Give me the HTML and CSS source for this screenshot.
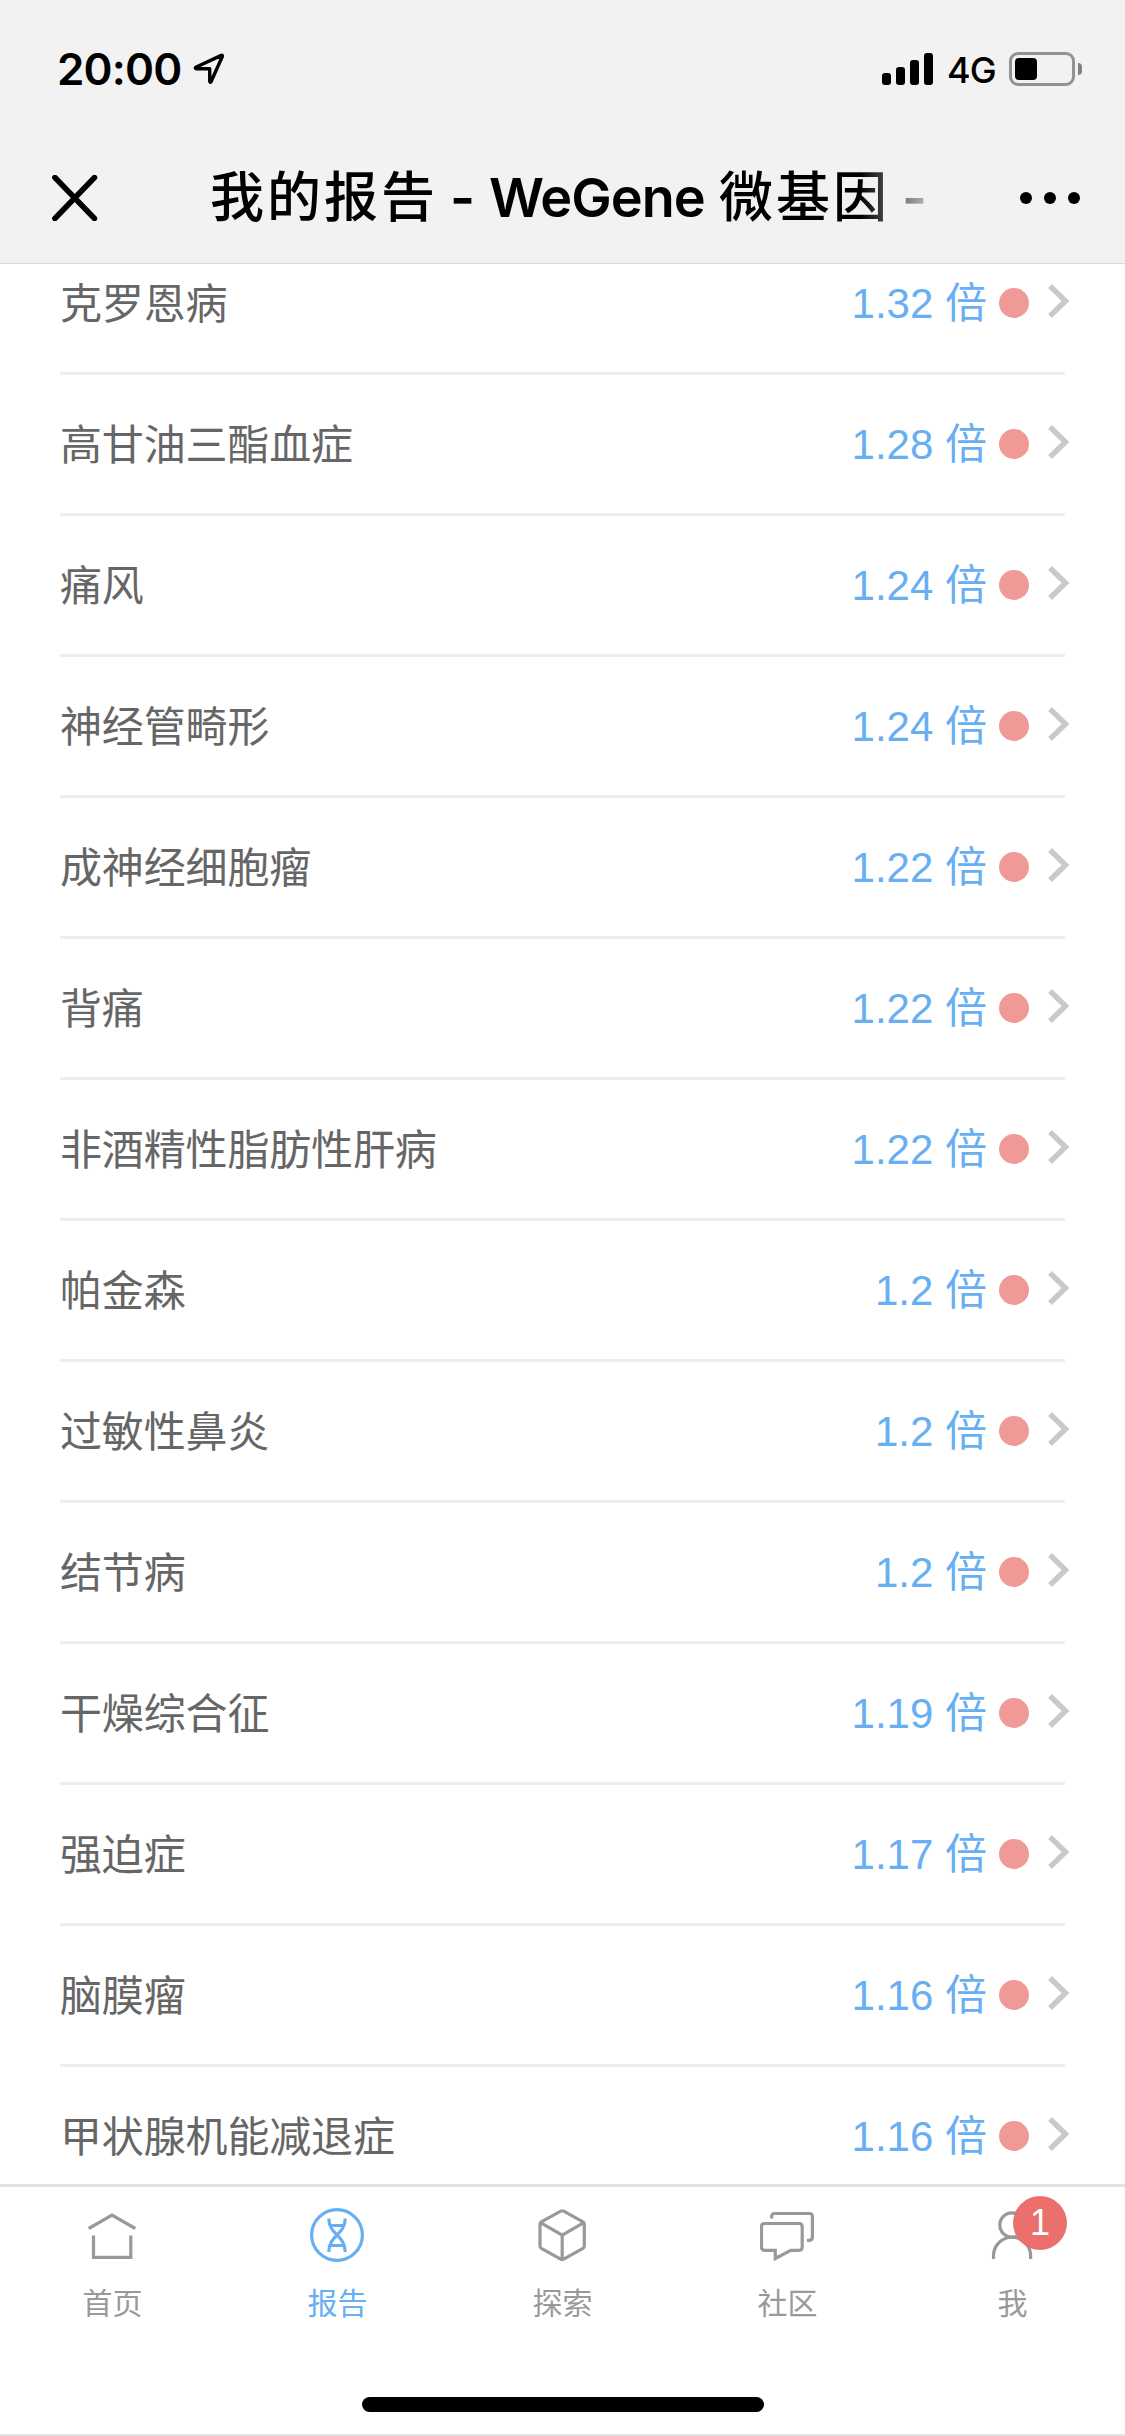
FILE: index.html
```html
<!DOCTYPE html>
<html lang="zh-CN">
<head>
  <meta charset="UTF-8" />
  <meta name="viewport" content="width=device-width, initial-scale=1.0"/>
  <title>我的报告 - WeGene 微基因</title>
  <link rel="stylesheet" href="styles.css">
</head>
<body>

<header class="header">
  <div class="status-bar">
    <span class="time">20:00</span>
    <svg class="location" width="32" height="32" viewBox="0 0 32 32"><path d="M2.8 14.3 L28.3 2.4 Q29.9 2 29.2 3.8 L18 28.8 Q17 30 16.7 28.3 V15.7 L3.4 15.8 Q1.6 15.3 2.8 14.3 Z"/></svg>
    <div class="signal"><i></i><i></i><i></i><i></i></div>
    <span class="network">4G</span>
    <div class="battery"><div class="battery-level"></div></div>
    <div class="battery-cap"></div>
  </div>
  <div class="nav-bar">
    <svg class="close" width="46" height="46" viewBox="0 0 46 46"><path d="M2.9 2.5 L42.5 43.5 M42.5 2.5 L2.9 43.5"/></svg>
    <h1 class="title"><span class="cn">我的报告</span><span class="dash">-</span><span class="en">WeGene </span><span class="cn">微基因</span><span class="dash">-</span></h1>
    <div class="more"><i></i><i></i><i></i></div>
  </div>
</header>

<main class="report">
  <ul class="list" id="list"></ul>
</main>

<nav class="tab-bar">
  <a class="tab">
    <svg width="55" height="54" viewBox="0 0 55 54"><path d="M3.7 20.5 L27 7 L50.3 20.5 M8.5 27.5 V49.3 H45.8 V27.5"/></svg>
    <span>首页</span>
  </a>
  <a class="tab active">
    <svg width="55" height="54" viewBox="0 0 55 54"><circle cx="27" cy="27" r="25.4"/><path d="M18.8 10.5 C18.8 27 35.2 27 35.2 44 M35.2 10.5 C35.2 27 18.8 27 18.8 44 M20.5 17.5 H33.5 M20.5 37.5 H33.5"/></svg>
    <span>报告</span>
  </a>
  <a class="tab">
    <svg width="55" height="54" viewBox="0 0 55 54"><path d="M25.7 3.2 Q27.2 2.3 28.7 3.2 L48 13.8 Q49.3 14.6 49.3 16.2 V37.8 Q49.3 39.5 48 40.3 L28.7 51.2 Q27.2 52.1 25.7 51.2 L6.3 40.3 Q5 39.5 5 37.8 V16.2 Q5 14.6 6.3 13.8 Z M5.6 14.6 L27.2 27.2 L48.8 14.6 M27.2 27.2 V51.5"/></svg>
    <span>探索</span>
  </a>
  <a class="tab">
    <svg width="55" height="54" viewBox="0 0 55 54"><path d="M4.5 15.5 H39 Q42.2 15.5 42.2 18.7 V39 Q42.2 42.3 39 42.3 H30.8 L15.3 50.5 V42.3 H4.7 Q1.5 42.3 1.5 39 V18.7 Q1.5 15.5 4.5 15.5 Z M11.7 10.5 V8.5 Q11.7 5.5 14.7 5.5 H49.3 Q52.4 5.5 52.4 8.5 V29.3 Q52.4 32.3 49.3 32.3 H47"/></svg>
    <span>社区</span>
  </a>
  <a class="tab">
    <svg width="55" height="54" viewBox="0 0 55 54"><circle cx="27" cy="17" r="12.2"/><path d="M8.5 51 V47.8 A18.5 18.5 0 0 1 45.6 47.8 V51"/></svg>
    <span>我</span>
    <b class="badge">1</b>
  </a>
  <div class="home-indicator"></div>
</nav>

<script>
  const reports = [
    ["克罗恩病", "1.32"],
    ["高甘油三酯血症", "1.28"],
    ["痛风", "1.24"],
    ["神经管畸形", "1.24"],
    ["成神经细胞瘤", "1.22"],
    ["背痛", "1.22"],
    ["非酒精性脂肪性肝病", "1.22"],
    ["帕金森", "1.2"],
    ["过敏性鼻炎", "1.2"],
    ["结节病", "1.2"],
    ["干燥综合征", "1.19"],
    ["强迫症", "1.17"],
    ["脑膜瘤", "1.16"],
    ["甲状腺机能减退症", "1.16"]
  ];

  document.getElementById("list").innerHTML = reports.map(([name, risk]) => `
    <li class="item">
      <span class="name">${name}</span>
      <span class="risk">${risk} 倍</span>
      <i class="dot"></i>
      <svg class="arrow" width="22" height="34" viewBox="0 0 22 34"><path d="M2 2 L17.5 17 L2 32"/></svg>
    </li>`).join("");
</script>

</body>
</html>
```
FILE: styles.css
```css
* {
  box-sizing: border-box;
}

body {
  margin: 0;
  height: 2436px;
  display: flex;
  flex-direction: column;
  overflow: hidden;
  background-color: #fff;
  font-family: "Liberation Sans", "Noto Sans CJK SC", sans-serif;
}

svg {
  display: block;
  flex: none;
  fill: none;
}

/* header */
.header {
  flex: none;
  height: 264px;
  background-color: #f2f2f2;
  border-bottom: 1px solid #d9d9d9;
  color: #000;
}

.status-bar {
  display: flex;
  align-items: center;
  height: 138px;
  padding: 0 43px 0 57px;
  font-family: Inter, sans-serif;
}

.time {
  width: 136px;
  font-size: 44px;
  font-weight: 600;
  letter-spacing: -0.8px;
  white-space: nowrap;
}

.location {
  stroke: #000;
  stroke-width: 3.4;
  stroke-linejoin: round;
}

.signal {
  display: flex;
  align-items: flex-end;
  gap: 5px;
  height: 32px;
  margin-left: auto;
}

.signal i {
  width: 9px;
  height: 12px;
  border-radius: 3px;
  background-color: #000;
}

.signal i:nth-child(2) {
  height: 18px;
}

.signal i:nth-child(3) {
  height: 25px;
}

.signal i:nth-child(4) {
  height: 32px;
}

.network {
  width: 62px;
  margin: 2px 0 0 14px;
  font-size: 36px;
  font-weight: 500;
  letter-spacing: -1px;
}

.battery {
  width: 66px;
  height: 34px;
  padding: 3px;
  border: 3px solid #929292;
  border-radius: 9px;
}

.battery-level {
  width: 22px;
  height: 22px;
  border-radius: 4px;
  background-color: #000;
}

.battery-cap {
  width: 4px;
  height: 12px;
  margin-left: 3px;
  border-radius: 0 4px 4px 0;
  background-color: #828282;
}

.nav-bar {
  display: flex;
  align-items: center;
  height: 120px;
  padding: 0 45px 0 52px;
}

.close {
  stroke: #000;
  stroke-width: 5.5;
  stroke-linecap: round;
}

.title {
  display: flex;
  align-items: baseline;
  width: 738px;
  margin: 0 0 0 112px;
  white-space: nowrap;
  overflow: hidden;
  font-family: Inter, "Noto Sans CJK SC", sans-serif;
  font-size: 54px;
  font-weight: 500;
  line-height: 80px;
  -webkit-mask-image: linear-gradient(to right, #000 650px, transparent 738px);
  mask-image: linear-gradient(to right, #000 650px, transparent 738px);
}

.title .cn {
  letter-spacing: 3px;
}

.title .en {
  width: 230px;
  font-weight: 600;
  letter-spacing: -1px;
}

.title .dash {
  width: 51px;
  padding-right: 2px;
  text-align: center;
  font-weight: 600;
}

.more {
  display: flex;
  gap: 12px;
  margin-left: auto;
}

.more i {
  width: 12px;
  height: 12px;
  border-radius: 50%;
  background-color: #000;
}

/* report list */
.report {
  flex: 1;
  min-height: 0;
  overflow: hidden;
  padding: 0 60px;
}

/* scrolled a little, first row is half under the header */
.list {
  list-style: none;
  margin: -30px 0 0;
  padding: 0;
}

.item {
  display: flex;
  align-items: center;
  height: 141px;
  border-bottom: 3px solid #eceef0;
  font-size: 42px;
  line-height: 60px;
}

.name {
  flex: 1;
  padding-top: 3px;
  letter-spacing: -0.15px;
  color: #666;
}

.risk {
  padding-top: 1px;
  color: #67aef3;
}

.dot {
  width: 30px;
  height: 30px;
  margin: 0 19px 0 12px;
  border-radius: 50%;
  background-color: #ef9a97;
}

.arrow {
  margin: -4px -5px 0 0;
  stroke: #c9c9c9;
  stroke-width: 5.4;
}

/* bottom tabs */
.tab-bar {
  position: relative;
  flex: none;
  display: flex;
  height: 252px;
  border-top: 3px solid #e2e2e2;
  border-bottom: 2px solid #e2e2e2;
}

.tab {
  position: relative;
  flex: 1;
  display: flex;
  flex-direction: column;
  align-items: center;
  padding-top: 21px;
  font-size: 30px;
  line-height: 40px;
  color: #999;
}

.tab svg {
  margin-bottom: 22px;
  stroke: currentColor;
  stroke-width: 3.2;
}

.tab.active {
  color: #67aef3;
}

.badge {
  position: absolute;
  top: 9px;
  left: 113px;
  width: 54px;
  height: 54px;
  border-radius: 50%;
  background-color: #eb706d;
  color: #fff;
  font-size: 36px;
  font-weight: 400;
  line-height: 54px;
  text-align: center;
}

.home-indicator {
  position: absolute;
  left: 362px;
  bottom: 22px;
  width: 402px;
  height: 15px;
  border-radius: 8px;
  background-color: #000;
}
```
